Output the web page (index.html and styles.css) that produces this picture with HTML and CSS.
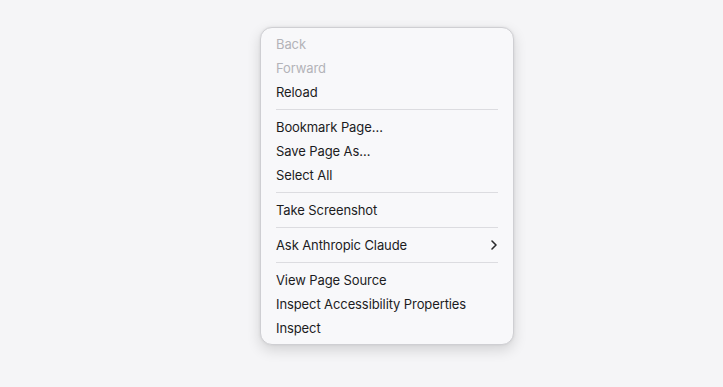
FILE: index.html
```html
<!DOCTYPE html>
<html>
<head>
<meta charset="utf-8">
<link rel="stylesheet" href="styles.css">
</head>
<body>
<div class="stage">
  <div class="menu">
    <div class="item disabled">Back</div>
    <div class="item disabled">Forward</div>
    <div class="item">Reload</div>
    <div class="sep"></div>
    <div class="item">Bookmark Page…</div>
    <div class="item">Save Page As…</div>
    <div class="item">Select All</div>
    <div class="sep"></div>
    <div class="item">Take Screenshot</div>
    <div class="sep"></div>
    <div class="item sub">Ask Anthropic Claude
      <svg class="chev" width="8" height="12" viewBox="0 0 8 12"><path d="M2 2 L6 6 L2 10" fill="none" stroke="#2a2a2c" stroke-width="1.6" stroke-linecap="round" stroke-linejoin="round"/></svg>
    </div>
    <div class="sep"></div>
    <div class="item">View Page Source</div>
    <div class="item">Inspect Accessibility Properties</div>
    <div class="item">Inspect</div>
  </div>
</div>
</body>
</html>
```
FILE: styles.css
```css
html, body {
  margin: 0;
  padding: 0;
  background: #f5f5f7;
  height: 100%;
}
.stage {
  padding-top: 27px;
  padding-left: 260px;
}
.menu {
  width: 254px;
  box-sizing: border-box;
  padding: 4px 0;
  background: #f8f8fa;
  border: 1px solid #cfcfd3;
  border-radius: 12px;
  box-shadow: 0 5px 14px rgba(0,0,0,0.14), 0 0 3px rgba(0,0,0,0.08);
  font-family: Inter, "Noto Sans", sans-serif;
  font-size: 13px;
  color: #1c1c1e;
}
.item {
  height: 24px;
  line-height: 24px;
  padding: 0 15px;
  display: flex;
  align-items: center;
  justify-content: space-between;
  letter-spacing: -0.1px;
}
.item.disabled {
  color: #b3b3b8;
}
.sep {
  height: 1px;
  margin: 5px 15px;
  background: #dcdce0;
}
.chev {
  display: block;
}
```
